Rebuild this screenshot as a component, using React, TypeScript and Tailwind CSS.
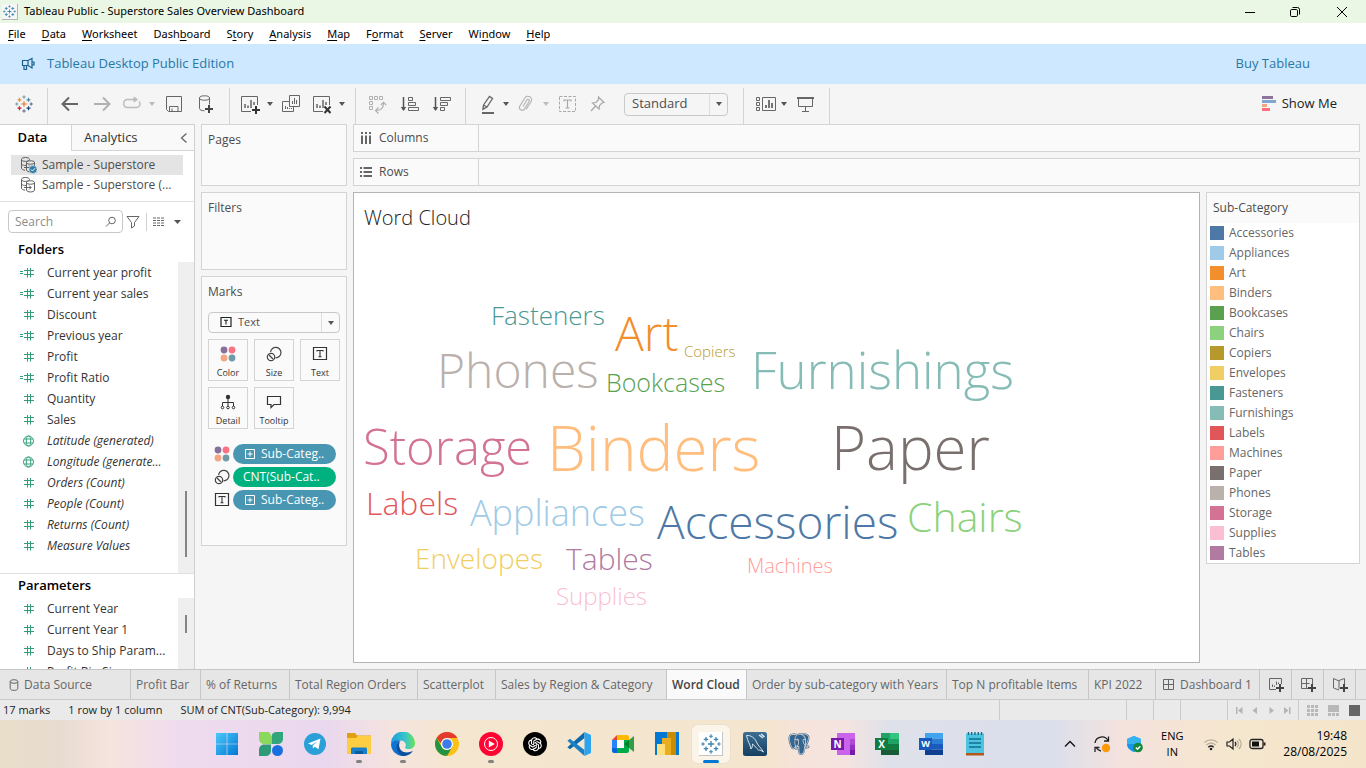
import React, { type ReactNode } from "react";
import { BiLogoPostgresql } from "react-icons/bi";
import { AiOutlineOpenAI } from "react-icons/ai";

type Word = { text: string; x: number; base: number; size: number; color: string };

const COLORS: Record<string, string> = {
  Accessories: "#4e79a7",
  Appliances: "#a0cbe8",
  Art: "#f28e2b",
  Binders: "#ffbe7d",
  Bookcases: "#59a14f",
  Chairs: "#8cd17d",
  Copiers: "#b6992d",
  Envelopes: "#f1ce63",
  Fasteners: "#499894",
  Furnishings: "#86bcb6",
  Labels: "#e15759",
  Machines: "#ff9d9a",
  Paper: "#79706e",
  Phones: "#bab0ac",
  Storage: "#d37295",
  Supplies: "#fabfd2",
  Tables: "#b07aa1",
};

// Word positions on the view canvas: left edge and baseline, in canvas units.
const WORDS: Word[] = [
  ["Fasteners", 137, 132, 26],
  ["Art", 261, 159, 48],
  ["Copiers", 330, 164, 15],
  ["Bookcases", 252, 199, 25],
  ["Phones", 83, 196, 48],
  ["Furnishings", 397, 196, 51],
  ["Storage", 9, 273, 49],
  ["Binders", 193, 278, 62],
  ["Paper", 477, 277, 60],
  ["Labels", 12, 322, 32],
  ["Appliances", 116, 334, 36],
  ["Accessories", 303, 346, 46],
  ["Chairs", 553, 339, 41],
  ["Envelopes", 61, 376, 28],
  ["Tables", 212, 378, 30],
  ["Machines", 393, 381, 20],
  ["Supplies", 202, 412, 24],
].map(([text, x, base, size]) => ({
  text: text as string,
  x: x as number,
  base: base as number,
  size: size as number,
  color: COLORS[text as string],
}));

/* ---------- icons ---------- */

function Svg({ w = 20, h = 20, stroke = "#666", children, sw = 1 }: { w?: number; h?: number; stroke?: string; sw?: number; children: ReactNode }) {
  return (
    <svg width={w} height={h} viewBox={`0 0 ${w} ${h}`} fill="none" stroke={stroke} strokeWidth={sw} aria-hidden="true" className="block shrink-0">
      {children}
    </svg>
  );
}

const plus = (x: number, y: number, r: number) => `M${x - r} ${y}H${x + r}M${x} ${y - r}V${y + r}`;

function TableauMark({ size, mono }: { size: number; mono?: boolean }) {
  const c = (hex: string) => (mono ? "#3f83ad" : hex);
  return (
    <svg width={size} height={size} viewBox="0 0 18 18" fill="none" strokeWidth="1.2" aria-hidden="true" className="block">
      <path d={plus(9, 9, 2.8)} stroke={c("#e8762d")} strokeWidth="1.2" />
      <path d={plus(4.5, 4.8, 2)} stroke={c("#eb912c")} />
      <path d={plus(13.5, 4.8, 2)} stroke={c("#59879b")} />
      <path d={plus(4.5, 13.2, 2)} stroke={c("#c72035")} />
      <path d={plus(13.5, 13.2, 2)} stroke={c("#1f457e")} />
      <path d={plus(9, 2, 1.7)} stroke={c("#7099a6")} strokeWidth="1" />
      <path d={plus(9, 16, 1.7)} stroke={c("#5b6591")} strokeWidth="1" />
      <path d={plus(1.8, 9, 1.6)} stroke={c("#7099a6")} strokeWidth="1" />
      <path d={plus(16.2, 9, 1.6)} stroke={c("#5b6591")} strokeWidth="1" />
    </svg>
  );
}

function Caret({ light }: { light?: boolean }) {
  return (
    <svg width="6" height="4" viewBox="0 0 6 4" aria-hidden="true" className="block">
      <path d="M0 0H6L3 4Z" fill={light ? "#bdbdbd" : "#555"} />
    </svg>
  );
}

const BackIcon = () => <Svg sw={2}><path d="M18 10H3M9 3.5L2.5 10L9 16.5" /></Svg>;
const ForwardIcon = () => <Svg stroke="#b0b0b0" sw={2}><path d="M2 10H17M11 3.5L17.5 10L11 16.5" /></Svg>;
const RedoIcon = () => (
  <Svg stroke="#bcbcbc" sw={1.4}>
    <path d="M14 5.5H5A4 4 0 0 0 1.7 9.5A4 4 0 0 0 5 13.5H15A3.8 3.8 0 0 0 18 10A4 4 0 0 0 17 7.5" />
    <path d="M12 3L15.5 5.5L12 8Z" fill="#bcbcbc" strokeWidth="1" />
  </Svg>
);
const SaveIcon = () => (
  <Svg>
    <path d="M2.5 2.5H17.5V17.5H4.5L2.5 15.5Z" />
    <path d="M5.5 17.5V12.5H14V17.5M8 14.5V17.5" />
  </Svg>
);
const DataPlusIcon = () => (
  <Svg>
    <ellipse cx="8.5" cy="4" rx="5" ry="2.2" />
    <path d="M3.5 4V14.5C3.5 16 6 16.8 8.5 16.8M13.5 4V10.5" />
    <path d="M13 11V19M9 15H17" stroke="#444" strokeWidth="2" />
  </Svg>
);
const SheetPlusIcon = () => (
  <Svg>
    <path d="M11 17.5H1.5V2.5H17.5V11" />
    <path d="M5 14V10M8 14V11.5M11 14V6M14 11V8" strokeWidth="1.5" />
    <path d="M16 12V20M12 16H20" stroke="#333" strokeWidth="2" />
  </Svg>
);
const DuplicateIcon = () => (
  <Svg>
    <path d="M8.5 1.5H18.5V12.5H8.5Z" />
    <path d="M8.5 7.5H1.5V17.5H12.5V12.5" />
    <path d="M11.5 10V7M13.5 10V4M15.5 10V6M4.5 15V12M6.5 15V13M8.5 15V14M10.5 15V14" />
  </Svg>
);
const ClearIcon = () => (
  <Svg>
    <path d="M11 17.5H1.5V2.5H17.5V11" />
    <path d="M5 14V10M8 14V11.5M11 14V6M14 11V8" strokeWidth="1.5" />
    <path d="M12.5 12.5L18.5 19M18.5 12.5L12.5 19" stroke="#333" strokeWidth="2" />
  </Svg>
);
const SwapIcon = () => (
  <Svg stroke="#b0b0b0">
    <path d="M1.5 2.5H4.5V5.5H1.5ZM6.5 2.5H9.5V5.5H6.5ZM11.5 2.5H14.5V5.5H11.5ZM1.5 7.5H4.5V10.5H1.5ZM1.5 12.5H4.5V15.5H1.5Z" />
    <path d="M8 16.5C13 16.5 15.5 14 15.5 9.5M10.5 13.5L7.5 16.5L10.5 19.5M12.8 11L15.5 8.3L18.2 11" strokeWidth="1.2" />
  </Svg>
);
const SortAscIcon = () => (
  <Svg>
    <path d="M3.5 3V16" stroke="#555" strokeWidth="1.5" />
    <path d="M0.8 13H6.2L3.5 17Z" fill="#555" stroke="none" />
    <path d="M8.5 3.5H12.5V6.5H8.5ZM8.5 8.5H15.5V11.5H8.5ZM8.5 13.5H18.5V16.5H8.5Z" />
  </Svg>
);
const SortDescIcon = () => (
  <Svg>
    <path d="M3.5 3V16" stroke="#555" strokeWidth="1.5" />
    <path d="M0.8 13H6.2L3.5 17Z" fill="#555" stroke="none" />
    <path d="M8.5 3.5H18.5V6.5H8.5ZM8.5 8.5H15.5V11.5H8.5ZM8.5 13.5H12.5V16.5H8.5Z" />
  </Svg>
);
const HighlightIcon = () => (
  <Svg>
    <path d="M5.5 11L11.5 2.5L14.5 4.5L9 13L5 15.2ZM5.5 11L9 13M4.5 15.5L6 13.5" strokeWidth="1.3" />
    <path d="M4 19H16" strokeWidth="2" />
  </Svg>
);
const ClipIcon = () => (
  <Svg stroke="#b5b5b5" sw={1.2}>
    <path d="M8 12.5L12 5.8A1.4 1.4 0 0 1 14.3 7.2L9.3 15.3A2.8 2.8 0 0 1 4.6 12.4L9.8 4A3.6 3.6 0 0 1 16 7.8L11 15.5" />
  </Svg>
);
const TextDashIcon = () => (
  <Svg stroke="#a8a8a8">
    <path d="M1.5 2.5H17.5V17.5H1.5Z" strokeDasharray="3 1.5" />
    <path d="M6 7.5V6H13V7.5M9.5 6V14M7.5 14H11.5" strokeWidth="1.2" />
  </Svg>
);
const PinIcon = () => (
  <Svg stroke="#a8a8a8" sw={1.2}>
    <path d="M10.5 3L16 8.5L14 9L11.5 11.5L11 15L4.5 9L8 8.5L10.5 5.5ZM7.5 12L3 17" />
  </Svg>
);
const CardsIcon = () => (
  <Svg w={22}>
    <path d="M1.5 3.5H4.5V6.5H1.5ZM1.5 8.5H4.5V11.5H1.5ZM1.5 13.5H4.5V16.5H1.5ZM7.5 3.5H20.5V16.5H7.5Z" />
    <path d="M11 14V11M14 14V6M17 14V9" strokeWidth="1.8" />
  </Svg>
);
const PresentIcon = () => (
  <Svg>
    <path d="M2 4H19" strokeWidth="2" />
    <path d="M3.5 4V12.5H17.5V4M10.5 12.5V17.5M7 17.5H14" />
  </Svg>
);
const ShowMeIcon = () => (
  <svg width="14" height="16" viewBox="0 0 14 16" aria-hidden="true">
    <path d="M0 0H11V3H0Z" fill="#8d749d" />
    <path d="M0 4H14V7H0Z" fill="#7fa6d0" />
    <path d="M0 8H5V11H0Z" fill="#f2a67c" />
    <path d="M0 12H8V15H0Z" fill="#ff6d7c" />
  </svg>
);

function SourceIcon({ active }: { active?: boolean }) {
  const bg = active ? "#e4e4e4" : "#fff";
  return (
    <Svg w={18} h={18} stroke="#5f5f5f">
      <path d="M1.5 3.5C1.5 0.8 9.5 0.8 9.5 3.5C9.5 6 1.5 6 1.5 3.5V12C1.5 13.3 3 14 5 14.2M1.5 8C2.5 9.3 4 9.5 6 9.5" />
      <path d="M6.5 6.5C6.5 4.2 14.5 4.2 14.5 6.5V14C14.5 16.6 6.5 16.6 6.5 14Z" fill={bg} />
      <path d="M6.5 6.5C6.5 8.8 14.5 8.8 14.5 6.5M4 11.5H11M9.2 9.5L11.2 11.5L9.2 13.5" />
      {active && (
        <>
          <circle cx="13" cy="13.5" r="4" fill="#2e7ea8" stroke="#e4e4e4" strokeWidth="0.6" />
          <path d="M11 13.5L12.5 15L15 12.2" stroke="#fff" />
        </>
      )}
    </Svg>
  );
}

function HashIcon({ calc }: { calc?: boolean }) {
  return (
    <Svg w={16} h={12} stroke="#2f9e75">
      <path d="M4 3.5H14M4 7.5H14M7.5 1V10.5M10.5 1V10.5" />
      {calc && <path d="M0 4.5H3M0 6.5H3" />}
    </Svg>
  );
}
const GlobeIcon = () => (
  <Svg w={16} h={12} stroke="#3aa37c">
    <circle cx="8.5" cy="6" r="5" />
    <ellipse cx="8.5" cy="6" rx="2.2" ry="5" />
    <path d="M4 4H13M4 8H13" />
  </Svg>
);

const DotsIcon = () => (
  <svg width="16" height="16" viewBox="0 0 16 16" aria-hidden="true" className="block shrink-0">
    <circle cx="4" cy="4" r="3.4" fill="#87719b" />
    <circle cx="12" cy="4" r="3.4" fill="#fb7184" />
    <circle cx="4" cy="12" r="3.4" fill="#f3a680" />
    <circle cx="12" cy="12" r="3.4" fill="#6f9aa6" />
  </svg>
);
const SizeIcon = () => (
  <Svg w={16} h={16} stroke="#444" sw={1.2}>
    <path d="M4.6 6A5.2 5.2 0 1 1 9.5 11.8" />
    <circle cx="5" cy="11" r="3.7" />
    <path d="M3 9L7 13" />
  </Svg>
);
const BoxTextIcon = () => (
  <Svg w={16} h={16} stroke="#333">
    <path d="M1.5 1.5H14.5V13.5H1.5Z" strokeWidth="1.2" />
    <path d="M5 5.5V4.5H11V5.5M8 4.5V10.5M6.5 10.8H9.5" strokeWidth="1.1" />
  </Svg>
);
const SmallBoxTextIcon = () => (
  <Svg w={12} h={12} stroke="#222">
    <path d="M1 1.5H11V10.5H1Z" strokeWidth="1.2" />
    <path d="M4 4.2H8M6 4.2V8.5" strokeWidth="1.1" />
  </Svg>
);
const DetailIcon = () => (
  <Svg w={16} h={16} stroke="#333">
    <circle cx="8" cy="3" r="2.2" fill="#333" stroke="none" />
    <path d="M8 3V12M2.5 12V8.5H13.5V12" />
    <circle cx="2.5" cy="13.5" r="1.3" fill="#fff" />
    <circle cx="8" cy="13.5" r="1.3" fill="#fff" />
    <circle cx="13.5" cy="13.5" r="1.3" fill="#fff" />
  </Svg>
);
const TooltipIcon = () => (
  <Svg w={16} h={16} stroke="#333" sw={1.2}>
    <path d="M1.5 2.5H14.5V10.5H8L5 13.5V10.5H1.5Z" />
  </Svg>
);
const PlusBoxIcon = () => (
  <Svg w={10} h={10} stroke="#fff">
    <path d="M0.5 0.5H9.5V9.5H0.5ZM2.5 5H7.5M5 2.5V7.5" />
  </Svg>
);

/* ---------- top bars ---------- */

function TitleBar() {
  return (
    <header className="flex h-[23px] shrink-0 items-center bg-[#eaf7e4] font-['Noto_Sans',sans-serif] text-[11px] text-black">
      <span className="ml-[2px] border-r border-b border-[#b5b5b5] bg-[#f6f6f6] p-px"><TableauMark size={13} mono /></span>
      <h1 className="ml-1.5 text-[11px] whitespace-nowrap">Tableau Public - Superstore Sales Overview Dashboard</h1>
      <div className="ml-auto flex">
        <button aria-label="Minimize" className="flex h-[21px] w-[45px] items-center justify-center"><Svg w={12} h={12} stroke="#000"><path d="M1 6.5H11" /></Svg></button>
        <button aria-label="Restore" className="flex h-[21px] w-[45px] items-center justify-center">
          <Svg w={12} h={12} stroke="#000"><rect x="1.5" y="3.5" width="7" height="7" rx="1.2" /><path d="M3.5 1.5H8.5A2 2 0 0 1 10.5 3.5V8.5" /></Svg>
        </button>
        <button aria-label="Close" className="flex h-[21px] w-[49px] items-center justify-center"><Svg w={12} h={12} stroke="#000"><path d="M1 1L11 11M11 1L1 11" /></Svg></button>
      </div>
    </header>
  );
}

const MENUS: [string, string, string][] = [
  ["", "F", "ile"], ["", "D", "ata"], ["", "W", "orksheet"], ["Dash", "b", "oard"], ["S", "t", "ory"], ["", "A", "nalysis"],
  ["", "M", "ap"], ["F", "o", "rmat"], ["", "S", "erver"], ["Wi", "n", "dow"], ["", "H", "elp"],
];

function MenuBar() {
  return (
    <nav className="flex h-[21px] shrink-0 items-center bg-white font-['Noto_Sans',sans-serif] text-[11px] text-black">
      {MENUS.map(([a, b, c]) => (
        <button key={a + b + c} className="px-2 leading-[20px]">{a}<u className="underline-offset-2">{b}</u>{c}</button>
      ))}
    </nav>
  );
}

function Banner() {
  return (
    <div className="flex h-10 shrink-0 items-center bg-[#cde8ff] text-[13px] text-[#2a77a3]">
      <span className="ml-[21px]">
        <Svg w={14} h={14} stroke="#17618c" sw={1.2}><path d="M1.5 3.5H7L11 1.5V11L7 8.5H1.5ZM3 8.5V12.5H5.5V8.5M7 3.5V8.5M11 5H13V8H11" /></Svg>
      </span>
      <p className="ml-3">Tableau Desktop Public Edition</p>
      <a href="#buy" className="mr-14 ml-auto">Buy Tableau</a>
    </div>
  );
}

function Tool({ label, w, children, off }: { label: string; w: string; children: ReactNode; off?: boolean }) {
  return (
    <button aria-label={label} disabled={off} className={`flex h-10 shrink-0 items-center justify-center ${w}`}>
      {children}
    </button>
  );
}
const Sep = ({ className = "" }: { className?: string }) => <span className={`h-9 w-px shrink-0 self-end bg-[#d4d4d4] ${className}`} />;

function Toolbar() {
  return (
    <div role="toolbar" className="flex h-10 shrink-0 items-center bg-[#f5f5f5]">
      <Tool label="Start page" w="w-[47px]"><TableauMark size={18} /></Tool>
      <Sep className="mr-1.5" />
      <Tool label="Undo" w="w-8"><BackIcon /></Tool>
      <Tool label="Redo" w="w-8" off><ForwardIcon /></Tool>
      <Tool label="Replay" w="w-7" off><RedoIcon /></Tool>
      <Tool label="Replay options" w="w-3" off><Caret light /></Tool>
      <Tool label="Save" w="w-8"><SaveIcon /></Tool>
      <Tool label="New data source" w="w-8"><DataPlusIcon /></Tool>
      <Sep className="mr-1 ml-[7px]" />
      <Tool label="New worksheet" w="w-8"><SheetPlusIcon /></Tool>
      <Tool label="New worksheet options" w="w-2"><Caret /></Tool>
      <Tool label="Duplicate" w="w-[34px]"><DuplicateIcon /></Tool>
      <Tool label="Clear sheet" w="w-7"><ClearIcon /></Tool>
      <Tool label="Clear options" w="w-3"><Caret /></Tool>
      <Sep className="mr-1.5 ml-[7px]" />
      <Tool label="Swap rows and columns" w="w-8" off><SwapIcon /></Tool>
      <Tool label="Sort ascending" w="w-8"><SortAscIcon /></Tool>
      <Tool label="Sort descending" w="w-8"><SortDescIcon /></Tool>
      <Sep className="mr-2 ml-[7px]" />
      <Tool label="Highlight" w="w-7"><HighlightIcon /></Tool>
      <Tool label="Highlight options" w="w-2"><Caret /></Tool>
      <Tool label="Group members" w="w-[30px]" off><ClipIcon /></Tool>
      <Tool label="Group options" w="w-3" off><Caret light /></Tool>
      <Tool label="Show mark labels" w="w-8" off><TextDashIcon /></Tool>
      <Tool label="Fix axes" w="w-7" off><PinIcon /></Tool>
      <div className="relative ml-3 h-[23px] w-[104px] shrink-0 rounded-sm border border-[#c9c9c9]">
        <select aria-label="Fit" className="block h-[19px] w-full appearance-none bg-transparent pl-[7px] text-[13px] leading-[19px] text-[#4e4e4e]">
          <option>Standard</option>
          <option>Fit Width</option>
          <option>Fit Height</option>
          <option>Entire View</option>
        </select>
        <span className="pointer-events-none absolute inset-y-0 right-0 flex w-[18px] items-center justify-center border-l border-[#ddd]"><Caret /></span>
      </div>
      <Sep className="mr-2 ml-[15px]" />
      <Tool label="Show or hide cards" w="w-7"><CardsIcon /></Tool>
      <Tool label="Card options" w="w-2"><Caret /></Tool>
      <Tool label="Presentation mode" w="w-[34px]"><PresentIcon /></Tool>
      <Sep className="ml-[7px]" />
      <button className="mr-[29px] ml-auto flex items-center gap-1.5 text-[13px] text-[#222]"><ShowMeIcon />Show Me</button>
    </div>
  );
}

/* ---------- data pane ---------- */

type Field = { name: string; kind: "num" | "calc" | "geo"; gen?: boolean };
const FIELDS: Field[] = [
  { name: "Current year profit", kind: "calc" },
  { name: "Current year sales", kind: "calc" },
  { name: "Discount", kind: "num" },
  { name: "Previous year", kind: "calc" },
  { name: "Profit", kind: "num" },
  { name: "Profit Ratio", kind: "calc" },
  { name: "Quantity", kind: "num" },
  { name: "Sales", kind: "num" },
  { name: "Latitude (generated)", kind: "geo", gen: true },
  { name: "Longitude (generate...", kind: "geo", gen: true },
  { name: "Orders (Count)", kind: "num", gen: true },
  { name: "People (Count)", kind: "num", gen: true },
  { name: "Returns (Count)", kind: "num", gen: true },
  { name: "Measure Values", kind: "num", gen: true },
];
const PARAMS: Field[] = ["Current Year", "Current Year 1", "Days to Ship Param...", "Profit Bin Size"].map((name) => ({ name, kind: "num" }));

function FieldList({ items }: { items: Field[] }) {
  return (
    <ul className="flex-1">
      {items.map((f) => (
        <li key={f.name} className="flex h-[21px] items-center pl-5">
          {f.kind === "geo" ? <GlobeIcon /> : <HashIcon calc={f.kind === "calc"} />}
          <span className={`ml-[11px] whitespace-nowrap text-[#333] ${f.gen ? "italic" : ""}`}>{f.name}</span>
        </li>
      ))}
    </ul>
  );
}

function DataPane() {
  return (
    <aside className="flex w-[195px] shrink-0 flex-col overflow-hidden border-t border-r border-[#d0d0d0] bg-white text-xs">
      <div className="flex h-[26px] shrink-0 text-[13px]">
        <button className="w-[71px] pr-1.5 font-semibold text-black">Data</button>
        <div className="flex flex-1 items-center border-b border-l border-[#d4d4d4] bg-[#f9f9f9]">
          <button className="ml-3 text-[#333]">Analytics</button>
          <button aria-label="Collapse pane" className="mr-1.5 ml-auto"><Svg w={8} h={12} sw={1.3}><path d="M6.5 1.5L1.5 6L6.5 10.5" /></Svg></button>
        </div>
      </div>
      <div className="shrink-0 border-b border-[#e0e0e0] pt-1 pr-[11px] pb-1.5 pl-[11px] text-[#4c4c4c]">
        <button className="flex h-5 w-full items-center bg-[#e4e4e4] pl-[9px] whitespace-nowrap"><SourceIcon active /><span className="ml-1">Sample - Superstore</span></button>
        <button className="flex h-5 w-full items-center pl-[9px] whitespace-nowrap"><SourceIcon /><span className="ml-1">Sample - Superstore (...</span></button>
      </div>
      <div className="flex shrink-0 items-center pt-2 pl-2">
        <label className="flex h-[23px] w-[115px] items-center rounded-sm border border-[#c8c8c8]">
          <input aria-label="Search" placeholder="Search" className="w-[96px] pl-1.5 outline-none placeholder:text-[#8c8c8c]" />
          <Svg w={12} h={12}><circle cx="7" cy="4.5" r="3.3" /><path d="M4.5 7L1 10.5" /></Svg>
        </label>
        <button aria-label="Filter" className="ml-[3px]"><Svg w={14} h={14}><path d="M1 1.5H13L8.5 7.5V11L5.5 13V7.5Z" /></Svg></button>
        <span className="mx-1.5 h-[18px] w-px bg-[#d0d0d0]" />
        <button aria-label="View" className="flex items-center gap-[9px]">
          <Svg w={12} h={10} sw={1.2}><path d="M0 1H12M0 3.5H12M0 6H12M0 8.5H12" strokeDasharray="3 1" /></Svg>
          <svg width="7" height="4" viewBox="0 0 7 4" aria-hidden="true"><path d="M0 0H7L3.5 4Z" fill="#555" /></svg>
        </button>
      </div>
      <h2 className="mt-2 mb-1 shrink-0 pl-[18px] text-[13px] leading-[17px] font-semibold text-black">Folders</h2>
      <div className="flex h-[312px] shrink-0 border-b border-[#e0e0e0]">
        <FieldList items={FIELDS} />
        <div className="flex w-4 items-end justify-center bg-[#efefef] pb-4"><span className="h-[66px] w-0.5 bg-[#858585]" /></div>
      </div>
      <h2 className="mt-[3px] mb-1 shrink-0 pl-[18px] text-[13px] leading-[17px] font-semibold text-black">Parameters</h2>
      <div className="flex min-h-0 flex-1 overflow-hidden">
        <FieldList items={PARAMS} />
        <div className="flex w-4 justify-center bg-[#efefef] pt-[17px]"><span className="h-[18px] w-0.5 bg-[#858585]" /></div>
      </div>
    </aside>
  );
}

/* ---------- shelves ---------- */

const CARD = "border border-[#d4d4d4] bg-[#fafafa]";

function MarkButton({ label, children }: { label: string; children: ReactNode }) {
  return (
    <button className="flex h-[42px] flex-col items-center border border-[#d4d4d4] pt-1.5 text-[9px] leading-[12px] text-[#333]">
      {children}
      <span className="mt-[5px]">{label}</span>
    </button>
  );
}

function Pill({ icon, children, green }: { icon: ReactNode; children: ReactNode; green?: boolean }) {
  return (
    <li className="flex items-center gap-[3px] pl-1.5">
      {icon}
      <button className={`flex h-5 w-[103px] items-center gap-1.5 rounded-full text-xs whitespace-nowrap text-white ${green ? "bg-[#00b180] pl-2.5" : "bg-[#4996b2] pl-3"}`}>
        {children}
      </button>
    </li>
  );
}

function ShelfColumn() {
  return (
    <section className="flex w-[146px] shrink-0 flex-col gap-1.5 text-xs text-[#4c4c4c]">
      <div className={`h-[62px] px-1.5 pt-[7px] ${CARD}`}><h2>Pages</h2></div>
      <div className={`h-[78px] px-1.5 pt-[7px] ${CARD}`}><h2>Filters</h2></div>
      <div className={`h-[270px] px-1.5 pt-[7px] ${CARD}`}>
        <h2>Marks</h2>
        <div className="relative mt-3 h-[21px] rounded-sm border border-[#c9c9c9]">
          <span className="pointer-events-none absolute top-[3px] left-[11px]"><SmallBoxTextIcon /></span>
          <select aria-label="Mark type" className="block h-full w-full appearance-none bg-transparent pl-[29px] text-[11px] text-[#4e4e4e]">
            <option>Text</option>
            <option>Bar</option>
            <option>Line</option>
          </select>
          <span className="pointer-events-none absolute inset-y-0 right-0 flex w-[18px] items-center justify-center border-l border-[#ddd]"><Caret /></span>
        </div>
        <div className="mt-1.5 grid grid-cols-3 gap-1.5">
          <MarkButton label="Color"><DotsIcon /></MarkButton>
          <MarkButton label="Size"><SizeIcon /></MarkButton>
          <MarkButton label="Text"><BoxTextIcon /></MarkButton>
          <MarkButton label="Detail"><DetailIcon /></MarkButton>
          <MarkButton label="Tooltip"><TooltipIcon /></MarkButton>
        </div>
        <ul className="mt-[15px] flex flex-col gap-[3px]">
          <Pill icon={<DotsIcon />}><PlusBoxIcon />Sub-Categ..</Pill>
          <Pill icon={<SizeIcon />} green>CNT(Sub-Cat..</Pill>
          <Pill icon={<BoxTextIcon />}><PlusBoxIcon />Sub-Categ..</Pill>
        </ul>
      </div>
    </section>
  );
}

function Shelf({ label, icon }: { label: string; icon: ReactNode }) {
  return (
    <div className={`flex h-7 shrink-0 ${CARD}`}>
      <h2 className="flex w-[125px] items-center gap-[7px] border-r border-[#d4d4d4] pl-1.5 text-xs text-[#4c4c4c]">{icon}{label}</h2>
    </div>
  );
}

function WordCloud() {
  return (
    <section className="relative min-w-0 flex-1 overflow-hidden border border-[#b4b4b4] bg-white">
      <h2 className="pt-3 pl-2.5 text-xl leading-[26px] font-light text-[#222]">Word Cloud</h2>
      {WORDS.map((w) => (
        <span
          key={w.text}
          className="absolute leading-none font-[350] whitespace-nowrap"
          style={{ left: w.x, top: Math.round(w.base - w.size * 0.888), fontSize: w.size, color: w.color }}
        >
          {w.text}
        </span>
      ))}
    </section>
  );
}

function Legend() {
  return (
    <aside className="w-[154px] shrink-0 self-start border border-[#d4d4d4] bg-white text-xs">
      <h2 className="bg-[#fafafa] py-[7px] pl-1.5 text-[#4c4c4c]">Sub-Category</h2>
      <ul>
        {Object.entries(COLORS).map(([name, color]) => (
          <li key={name} className="flex h-5 items-center gap-[5px] pl-[3px] text-[#666]">
            <span className="size-3.5" style={{ backgroundColor: color }} />
            {name}
          </li>
        ))}
      </ul>
    </aside>
  );
}

/* ---------- bottom bars ---------- */

const TABS: [string, string][] = [
  ["Profit Bar", "w-[70px]"],
  ["% of Returns", "w-[89px]"],
  ["Total Region Orders", "w-[128px]"],
  ["Scatterplot", "w-[78px]"],
  ["Sales by Region & Category", "w-[171px]"],
  ["Word Cloud", "w-[80px]"],
  ["Order by sub-category with Years", "w-[200px]"],
  ["Top N profitable Items", "w-[142px]"],
  ["KPI 2022", "w-[67px]"],
];

function SheetTabs() {
  const tab = "flex shrink-0 items-center border-r border-[#c6c6c6] whitespace-nowrap";
  return (
    <nav className="flex h-[30px] shrink-0 border-t border-[#c6c6c6] bg-[#e6e6e6] text-xs text-[#666]">
      <button className={`${tab} w-[131px] gap-[5px] pl-2`}>
        <Svg w={11} h={14}><ellipse cx="6" cy="3.5" rx="3.8" ry="1.8" /><path d="M2.2 3.5V10.5C2.2 13 9.8 13 9.8 10.5V3.5" /></Svg>
        Data Source
      </button>
      {TABS.map(([t, w]) => (
        <button key={t} className={`${tab} ${w} pl-[5px] ${t === "Word Cloud" ? "bg-[#fafafa] font-semibold text-[#444]" : ""}`}>{t}</button>
      ))}
      <button className={`${tab} w-[104px] gap-[5px] pl-[7px]`}>
        <Svg w={12} h={12}><path d="M0.5 0.5H10.5V10.5H0.5ZM0.5 5.5H10.5M5.5 0.5V10.5" /></Svg>
        Dashboard 1
      </button>
      <button aria-label="New worksheet" className={`${tab} w-8 justify-center`}>
        <Svg w={16} h={16}><path d="M8 12.5H1.5V1.5H13.5V7M4.5 10V7.5M6.5 10V8.5M8.5 8V4.5M10.5 7V5.5" /><path d="M12 7V15M8 11H16" stroke="#444" strokeWidth="2" /></Svg>
      </button>
      <button aria-label="New dashboard" className={`${tab} w-8 justify-center`}>
        <Svg w={16} h={16}><path d="M8 11.5H1.5V1.5H12.5V7M1.5 6.5H9.5M6.5 1.5V11.5" /><path d="M12 7V15M8 11H16" stroke="#444" strokeWidth="2" /></Svg>
      </button>
      <button aria-label="New story" className={`${tab} w-8 justify-center`}>
        <Svg w={16} h={16}><path d="M7 4L1.5 1.5V11L7 13M7 3.5L12.5 1.5V7M7 3.5V12" /><path d="M12 7V15M8 11H16" stroke="#444" strokeWidth="2" /></Svg>
      </button>
    </nav>
  );
}

function StatusBar() {
  const cell = "h-full shrink-0 border-l border-[#cacaca]";
  return (
    <footer className="flex h-[21px] shrink-0 items-center border-t border-[#cacaca] bg-[#eaeaea] text-[11px] whitespace-nowrap text-[#222]">
      <p className="flex gap-[18px] pl-[3px]"><span>17 marks</span><span>1 row by 1 column</span><span>SUM of CNT(Sub-Category): 9,994</span></p>
      <span className={`${cell} ml-auto w-[127px]`} />
      <span className={`${cell} w-[27px]`} />
      <span className={`${cell} w-[27px]`} />
      <span className={`${cell} w-[47px]`} />
      <div className={`${cell} flex w-[71px] items-center gap-2 pl-[7px]`}>
        {[["First", "M1 1H2.5V8H1ZM7.5 1V8L3 4.5Z"], ["Previous", "M6 1V8L1.5 4.5Z"], ["Next", "M2.5 1V8L7 4.5Z"], ["Last", "M1 1V8L5.5 4.5ZM6 1H7.5V8H6Z"]].map(([n, d]) => (
          <button key={n} aria-label={n}><svg width="8" height="9" viewBox="0 0 8 9" className="block"><path d={d} fill="#b4b4b4" /></svg></button>
        ))}
      </div>
      <div className={`${cell} flex w-[68px] items-center gap-[10px] pl-2`}>
        <button aria-label="Sheet sorter"><svg width="11" height="11" viewBox="0 0 11 11" className="block"><path d="M0 0H3V3H0ZM4 0H7V3H4ZM8 0H11V3H8ZM0 4H3V7H0ZM4 4H7V7H4ZM8 4H11V7H8ZM0 8H3V11H0ZM4 8H7V11H4ZM8 8H11V11H8Z" fill="#b8b8b8" /></svg></button>
        <button aria-label="Filmstrip"><svg width="11" height="11" viewBox="0 0 11 11" className="block"><path d="M0 0H11V7H0ZM0 8H3V11H0ZM4 8H7V11H4ZM8 8H11V11H8Z" fill="#b8b8b8" /></svg></button>
        <button aria-label="Tabs"><svg width="11" height="11" viewBox="0 0 11 11" className="block"><path d="M0 0H11V11H0Z" fill="#666" /></svg></button>
      </div>
    </footer>
  );
}

function App24({ children }: { children: ReactNode }) {
  return <svg width="24" height="24" viewBox="0 0 24 24" fill="none" aria-hidden="true" className="block">{children}</svg>;
}

const APPS: { name: string; icon: ReactNode; running?: boolean; active?: boolean }[] = [
  {
    name: "Start",
    icon: (
      <App24>
        <defs><linearGradient id="win" x1="0" y1="0" x2="1" y2="1"><stop stopColor="#4cc8fa" /><stop offset="1" stopColor="#0078d4" /></linearGradient></defs>
        <path d="M1 1H11.7V11.7H1ZM12.3 1H23V11.7H12.3ZM1 12.3H11.7V23H1ZM12.3 12.3H23V23H12.3Z" fill="url(#win)" />
      </App24>
    ),
  },
  {
    name: "Clover",
    icon: (
      <App24>
        <path d="M0 0H8C11 0 12 2 12 5V12H6C2 12 0 10 0 6Z" fill="#8ad95c" />
        <path d="M24 0H18C14 0 12.5 2 12.5 6V12H18C22 12 24 10 24 6Z" fill="#33a57a" />
        <path d="M0 24H6C10 24 12 22 12 18V12.5H6C2 12.5 0 14.5 0 18Z" fill="#2e9a78" />
        <circle cx="18.5" cy="18.5" r="5.5" fill="#1a6fe0" />
      </App24>
    ),
  },
  {
    name: "Telegram",
    icon: (
      <App24>
        <circle cx="12" cy="12" r="11" fill="#2a9fd8" />
        <path d="M5 11.6L17.5 6.5L15.5 17.3L11.8 14.7L10 16.5L9.7 13.6L14.5 9.3L8.6 13Z" fill="#fff" />
      </App24>
    ),
  },
  {
    name: "File Explorer",
    running: true,
    icon: (
      <App24>
        <path d="M0 1H8L10 3.5H24V8H0Z" fill="#e0a010" />
        <path d="M0 6H9L11 4H24V22H0Z" fill="#ffcd42" />
        <path d="M4 22V17C4 16 5 15.5 6 15.5H18C19 15.5 20 16 20 17V22Z" fill="#1a7fc9" />
        <path d="M8 19H16V22H8Z" fill="#0b5c9c" />
      </App24>
    ),
  },
  {
    name: "Edge",
    running: true,
    icon: (
      <App24>
        <defs>
          <linearGradient id="edgeTop" x1="0" y1="0" x2="1" y2="0"><stop stopColor="#1d9be0" /><stop offset=".6" stopColor="#38c6c8" /><stop offset="1" stopColor="#6be25a" /></linearGradient>
        </defs>
        <path d="M0 12A12 12 0 0 1 24 11C24 15 21 17 17.5 17C14.5 17 13.5 15.8 14.5 14.5C15.5 12.5 14.5 9 10 8.5C5 8 1 10 0 12Z" fill="url(#edgeTop)" />
        <path d="M0 12C1 9 5 7.5 9.5 8.5C7 9.5 6 12 6.5 15C7.2 19 10.5 22.5 14.5 23.7A12 12 0 0 1 0 12Z" fill="#1173d0" />
        <path d="M10 8.6C7.6 10.6 7.4 15 10 18.3C13 21.3 18 21 22 18.8C19.5 22.5 16.5 24 12 24C7 22.5 3.5 15.5 7 10.5Z" fill="#0c4f9c" />
      </App24>
    ),
  },
  {
    name: "Chrome",
    icon: (
      <App24>
        <circle cx="12" cy="12" r="12" fill="#fbc116" />
        <path d="M1.6 6A12 12 0 0 1 22.4 6H12A6 6 0 0 0 6.8 9.2L5.5 11Z" fill="#e33b2e" />
        <path d="M1.6 6L6.8 15A6 6 0 0 0 12 18L11.5 24A12 12 0 0 1 1.6 6Z" fill="#229342" />
        <path d="M12 24L17.2 15L14 16.5L10 17.5Z" fill="#229342" />
        <circle cx="12" cy="12" r="6" fill="#fff" />
        <circle cx="12" cy="12" r="4.8" fill="#3a7cec" />
      </App24>
    ),
  },
  {
    name: "YouTube Music",
    running: true,
    icon: (
      <App24>
        <circle cx="12" cy="12" r="12" fill="#ff0433" />
        <circle cx="12" cy="12" r="6.5" stroke="#fff" />
        <path d="M9.8 8.5L15.8 12L9.8 15.5Z" fill="#fff" />
      </App24>
    ),
  },
  {
    name: "ChatGPT",
    icon: <span className="flex size-6 items-center justify-center rounded-full bg-black text-white"><AiOutlineOpenAI size={18} /></span>,
  },
  {
    name: "Visual Studio Code",
    icon: (
      <App24>
        <path d="M17.5 0L17.5 6L3 17.2L0.4 15.2Z" fill="#0a68ac" />
        <path d="M17.5 24V18L3 6.8L0.4 8.8Z" fill="#1c7fc4" />
        <path d="M17.5 0L24 3V21L17.5 24Z" fill="#2fa4ee" />
      </App24>
    ),
  },
  {
    name: "Google Meet",
    icon: (
      <App24>
        <path d="M6 3H16C17 3 18 4 18 5V8H6Z" fill="#ffba00" />
        <path d="M1 8L6 3V8Z" fill="#ea4335" />
        <path d="M1 8H6V16H1Z" fill="#2684fc" />
        <path d="M1 16H6V21H3C2 21 1 20 1 19Z" fill="#0066da" />
        <path d="M6 16H13V8H18V19C18 20 17 21 16 21H6Z" fill="#00ac47" />
        <path d="M6 8H13V16H6Z" fill="#fff" />
        <path d="M13 12L23 4V20Z" fill="#2f9e44" />
        <path d="M13 12L18 8V16Z" fill="#00832d" />
      </App24>
    ),
  },
  {
    name: "Power BI",
    icon: (
      <App24>
        <path d="M0 0H24V23H0Z" fill="#0078d4" />
        <path d="M12 0H21V23H12Z" fill="#c98b00" />
        <path d="M7 6H16V23H7Z" fill="#e8ae1d" />
        <path d="M2 12H10V23H2Z" fill="#ffe07a" />
      </App24>
    ),
  },
  {
    name: "Tableau",
    active: true,
    icon: <span className="flex size-6 items-center justify-center border-r border-b border-[#c4c4c4] bg-white"><TableauMark size={20} mono /></span>,
  },
  {
    name: "MySQL Workbench",
    icon: (
      <App24>
        <defs><linearGradient id="mysql" x1="0" y1="0" x2="0" y2="1"><stop stopColor="#3d6f94" /><stop offset="1" stopColor="#143f60" /></linearGradient></defs>
        <rect width="24" height="24" rx="2.5" fill="url(#mysql)" />
        <path d="M3.5 3.5C8 3 12 6 14 11C15 14 18 15.5 20.5 20C18.5 18.5 17 18 15.5 18C12 15 11 12.5 9.5 12C9.5 14.5 9 16 8 17C7.5 13 4.5 9 3.5 3.5Z" stroke="#d6e4ee" />
        <path d="M16 3L20 6M18 2L21.5 5" stroke="#d6e4ee" strokeWidth="1.5" />
      </App24>
    ),
  },
  { name: "PostgreSQL", icon: <BiLogoPostgresql size={26} color="#336791" /> },
  {
    name: "OneNote",
    icon: (
      <App24>
        <path d="M6 1H24V23H6Z" fill="#ca64ea" />
        <path d="M19 7H24V12.5H19Z" fill="#ae4bd5" />
        <path d="M19 12.5H24V17.5H19Z" fill="#9332bf" />
        <path d="M19 17.5H24V23H19Z" fill="#7719aa" />
        <rect y="6" width="13" height="12" fill="#7719aa" />
        <text x="6.5" y="15.5" textAnchor="middle" fontSize="10" fontWeight="700" fill="#fff">N</text>
      </App24>
    ),
  },
  {
    name: "Excel",
    icon: (
      <App24>
        <path d="M6 1H24V23H6Z" fill="#21a366" />
        <path d="M15 1H24V7H15Z" fill="#33c481" />
        <path d="M6 12H15V17.5H6Z" fill="#107c41" />
        <path d="M6 17.5H24V23H6Z" fill="#185c37" />
        <path d="M15 12H24V17.5H15Z" fill="#107c41" />
        <rect y="6" width="13" height="12" fill="#107c41" />
        <text x="6.5" y="15.5" textAnchor="middle" fontSize="10" fontWeight="700" fill="#fff">X</text>
      </App24>
    ),
  },
  {
    name: "Word",
    icon: (
      <App24>
        <path d="M6 1H24V6.5H6Z" fill="#41a5ee" />
        <path d="M6 6.5H24V12H6Z" fill="#2b7cd3" />
        <path d="M6 12H24V17.5H6Z" fill="#185abd" />
        <path d="M6 17.5H24V23H6Z" fill="#103f91" />
        <rect y="6" width="13" height="12" fill="#185abd" />
        <text x="6.5" y="15.3" textAnchor="middle" fontSize="9" fontWeight="700" fill="#fff">W</text>
      </App24>
    ),
  },
  {
    name: "Notepad",
    icon: (
      <App24>
        <path d="M3 1.5H21V21H3Z" fill="#4cc4e0" />
        <path d="M3 21H21V23.5H3Z" fill="#b5561a" />
        <path d="M5.5 0V3M8.7 0V3M12 0V3M15.3 0V3M18.5 0V3" stroke="#1b6b8c" strokeWidth="1.4" />
        <path d="M6 7H18M6 11H18M6 15H18" stroke="#0f6f93" strokeWidth="1.6" />
      </App24>
    ),
  },
];

function Taskbar() {
  return (
    <footer className="flex h-12 shrink-0 items-center bg-[linear-gradient(90deg,#eadfc8_0%,#e6dbcf_4%,#f6e4de_8%,#efdbee_13%,#ead8ee_24%,#f5e4de_29%,#f5e6cf_33%,#f4e5cf_56%,#f6e3dc_59%,#f4e4e0_62%,#dfe1ea_65%,#dbdfec_77%,#f4e2de_82%,#f5e6cf_89%,#f4e5ca_100%)] font-['Open_Sans',sans-serif] text-xs text-black">
      <div className="ml-52 flex gap-1.5">
        {APPS.map((a) => (
          <button key={a.name} aria-label={a.name} className={`relative flex h-[38px] w-[38px] items-center justify-center rounded-md ${a.active ? "bg-[#fbf4e8] ring-1 ring-[#ece0cd]" : ""}`}>
            {a.icon}
            {a.running && <span className="absolute bottom-0 h-[3px] w-1.5 rounded-full bg-[#85807e]" />}
            {a.active && <span className="absolute bottom-0 h-[3px] w-4 rounded-full bg-[#0078d4]" />}
          </button>
        ))}
      </div>
      <div className="mr-[19px] ml-auto flex items-center">
        <button aria-label="Show hidden icons" className="flex w-8 justify-center"><Svg w={12} h={8} stroke="#111" sw={1.3}><path d="M1 6.5L6 1.5L11 6.5" /></Svg></button>
        <button aria-label="Updates" className="flex w-8 justify-center">
          <Svg w={18} h={18} stroke="#222" sw={1.3}><path d="M2 8A7 7 0 0 1 15 5.5M15.5 1.5V6H11M8 16A7 7 0 0 1 3 12.5M2 17V12.5H6.5" /><circle cx="13" cy="13" r="4.2" fill="#fb9a09" stroke="none" /></Svg>
        </button>
        <button aria-label="Security" className="flex w-[34px] justify-center">
          <Svg w={16} h={17} stroke="none"><path d="M7 0L14 3V8C14 12 11 14.5 7 16C3 14.5 0 12 0 8V3Z" fill="#1b93e8" /><path d="M7 0L14 3V8H0V3Z" fill="#35b4f0" /><circle cx="11" cy="11.5" r="4.8" fill="#12893c" /><path d="M8.8 11.5L10.5 13.2L13.3 10.2" stroke="#fff" strokeWidth="1.3" /></Svg>
        </button>
        <button className="w-10 text-center text-[11px] leading-[16px]">ENG<br />IN</button>
        <button aria-label="Network, volume and battery" className="ml-[11px] flex items-center gap-[7px]">
          <Svg w={16} h={16} stroke="#b9ad9b" sw={1.3}><path d="M1.5 6.5A9.5 9.5 0 0 1 14.5 6.5M3.5 9A6.5 6.5 0 0 1 12.5 9" /><path d="M5.3 11.2A4 4 0 0 1 10.7 11.2" stroke="#222" /><circle cx="8" cy="13" r="1.3" fill="#222" stroke="none" /></Svg>
          <Svg w={16} h={14} stroke="#222" sw={1.2}><path d="M1 5H3.5L7 2V12L3.5 9H1ZM9 5A3 3 0 0 1 9 9" /><path d="M11 3.5A5 5 0 0 1 11 10.5M13 2A7 7 0 0 1 13 12" stroke="#b9ad9b" /></Svg>
          <Svg w={18} h={12} stroke="#222" sw={1.3}><rect x="1" y="1.5" width="13" height="9" rx="2" /><path d="M15.5 4.5V7.5" strokeWidth="2" /><rect x="3" y="3.5" width="7" height="5" fill="#111" stroke="none" /></Svg>
        </button>
        <time className="ml-4 text-right leading-[16px]">19:48<br />28/08/2025</time>
      </div>
    </footer>
  );
}

export default function App() {
  return (
    <div className="flex h-screen flex-col overflow-hidden bg-[#f5f5f5] font-['Open_Sans','Noto_Sans',sans-serif]">
      <TitleBar />
      <MenuBar />
      <Banner />
      <Toolbar />
      <main className="flex min-h-0 flex-1 gap-1.5 pr-1.5">
        <DataPane />
        <ShelfColumn />
        <div className="flex min-w-0 flex-1 flex-col gap-1.5 pb-1.5">
          <Shelf label="Columns" icon={<Svg w={12} h={12} sw={2}><path d="M2 3.5V12M6 3.5V12M10 3.5V12M2 0V2M6 0V2M10 0V2" /></Svg>} />
          <Shelf label="Rows" icon={<Svg w={12} h={12} sw={2}><path d="M3.5 2H12M3.5 6H12M3.5 10H12M0 2H2M0 6H2M0 10H2" /></Svg>} />
          <div className="flex min-h-0 flex-1 gap-1.5">
            <WordCloud />
            <Legend />
          </div>
        </div>
      </main>
      <SheetTabs />
      <StatusBar />
      <Taskbar />
    </div>
  );
}
